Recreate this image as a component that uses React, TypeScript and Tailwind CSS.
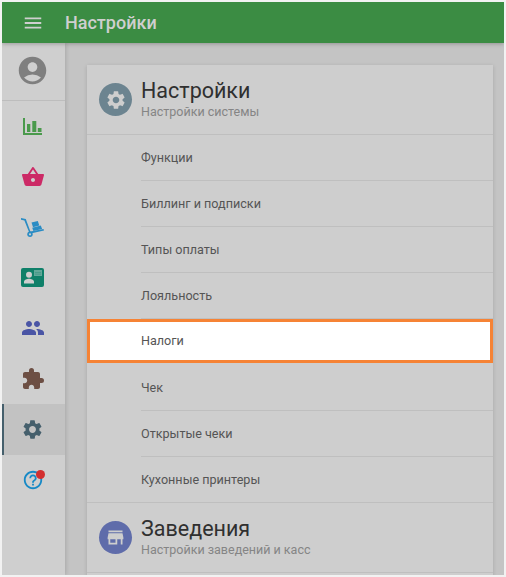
import { MdAccountCircle, MdExtension, MdHelpOutline, MdMenu, MdPeople, MdSettings, MdShoppingBasket, MdStore } from "react-icons/md";

const rows = ["Функции", "Биллинг и подписки", "Типы оплаты", "Лояльность", "Налоги", "Чек", "Открытые чеки", "Кухонные принтеры"];

const ChartIcon = () => (
  <svg viewBox="0 0 19 17" className="w-[19px] h-[17px] text-[#4a9a4c]" fill="currentColor">
    <path d="M0 0h2v15h17v2H0z" />
    <path d="M4 6h3.300v8H4zM9.300 3h4v11h-4zM14.800 10h3.700v4h-3.700z" />
  </svg>
);

const DollyIcon = () => (
  <svg viewBox="0 0 23 19" className="w-[23px] h-[19px] text-[#2a8cc4]" fill="currentColor">
    <path d="M0 0l4.800 1 4.600 12.400L22.500 11l.5 1.600-13.400 3-1.200-.6L3.400 2.600 0 1.800z" />
    <circle cx="9" cy="16.300" r="2.700" />
    <circle cx="9" cy="16.300" r="1.100" fill="#cfcfcf" />
    <path d="M10.500 4.600L16.800 3l1.500 4.500-6.300 1.700z" />
    <path d="M11.200 9.800l8.600-2.400 1.300 3.600-8.700 2z" />
  </svg>
);

const CardIcon = () => (
  <svg viewBox="0 0 23 19" className="w-[23px] h-[19px]">
    <rect width="23" height="19" rx="2" fill="#0f8069" />
    <circle cx="8" cy="6.800" r="3" fill="#cfcfcf" />
    <path d="M3 15.500v-1.700c0-1.800 3-3 5-3s5 1.200 5 3v1.700z" fill="#cfcfcf" />
    <rect x="13" y="2" width="8" height="6" fill="#62a899" />
    <path d="M14 4h6v.8h-6zM14 5.800h6v.8h-6z" fill="#0f8069" opacity="0.4" />
  </svg>
);

const SideItem = ({ children, active }: { children: React.ReactNode; active?: boolean }) => (
  <div className={`h-[50.500px] flex items-center justify-center ${active ? "bg-[#c2c2c2] border-l-2 border-[#455f6c] pr-[4px]" : "pr-[2px]"}`}>
    {children}
  </div>
);

const SectionHead = ({ title, sub, color, icon }: { title: string; sub: string; color: string; icon: React.ReactNode }) => (
  <div className="h-[69px] flex items-center pl-3">
    <div className={`w-[33px] h-[33px] rounded-full flex items-center justify-center ${color}`}>{icon}</div>
    <div className="ml-[9px] -mt-[2px]">
      <div className="text-[21.500px] leading-[26px] text-[#303030]">{title}</div>
      <div className="text-[12.500px] leading-[15px] text-[#858585]">{sub}</div>
    </div>
  </div>
);

export default function App() {
  return (
    <div className="w-[506px] h-[577px] p-[2px] bg-[#f2f2f2] overflow-hidden font-['Roboto',sans-serif]">
      <div className="h-full flex flex-col bg-[#c4c4c4] overflow-hidden">
        <header className="relative z-10 h-[41px] shrink-0 bg-[#3b8c43] flex items-center shadow-[0_1px_4px_rgba(0,0,0,0.25)]">
          <MdMenu className="ml-[20px] w-[22px] h-[22px] text-[#cfcfcf]" />
          <div className="ml-[21px] text-[18px] font-medium text-[#cfcfcf]">Настройки</div>
        </header>
        <div className="flex flex-1 min-h-0">
          <aside className="w-[63px] shrink-0 bg-[#cfcfcf] shadow-[1px_0_4px_rgba(0,0,0,0.15)]">
            <div className="h-[58px] flex items-center justify-center border-b border-[#bdbdbd] pr-[2px] pb-[2px]">
              <MdAccountCircle className="w-[33px] h-[33px] text-[#7f7f7f]" />
            </div>
            <SideItem><ChartIcon /></SideItem>
            <SideItem><MdShoppingBasket className="w-6 h-6 text-[#cc2a66]" /></SideItem>
            <SideItem><DollyIcon /></SideItem>
            <SideItem><CardIcon /></SideItem>
            <SideItem><MdPeople className="w-6 h-6 text-[#4a55a5]" /></SideItem>
            <SideItem><MdExtension className="w-6 h-6 text-[#6d4f44]" /></SideItem>
            <SideItem active><MdSettings className="w-[23px] h-[23px] text-[#455f6c]" /></SideItem>
            <SideItem>
              <div className="relative">
                <MdHelpOutline className="w-[22px] h-[22px] text-[#1689c6]" />
                <div className="absolute top-px -right-[1.500px] w-[9px] h-[9px] rounded-full bg-[#d32f2f]" />
              </div>
            </SideItem>
          </aside>
          <main className="flex-1 pl-[22px] pr-[11px] pt-[22px] min-w-0">
            <div className="bg-[#cecece] shadow-[0_1px_4px_rgba(0,0,0,0.15)]">
              <SectionHead title="Настройки" sub="Настройки системы" color="bg-[#6c8490]" icon={<MdSettings className="w-[22px] h-[22px] text-[#cecece]" />} />
              <div className="border-t border-[#bfbfbf]">
                {rows.map((r, i) =>
                  r === "Налоги" ? (
                    <div key={r} className="h-[44px] mb-[2px] flex items-center pl-[51px] bg-white border-[3px] border-[#f68335] text-[12.600px] text-[#555555]">
                      {r}
                    </div>
                  ) : (
                    <div key={r} className={`${i === rows.length - 1 ? "h-[45px]" : "h-[46px]"} flex items-center pl-[54px] text-[12.600px] text-[#555555]`}>
                      <div className={`h-full flex-1 flex items-center pt-px ${i === rows.length - 1 ? "" : "border-b border-[#bfbfbf]"}`}>{r}</div>
                    </div>
                  ),
                )}
              </div>
              <div className="border-t border-[#bfbfbf]">
                <SectionHead title="Заведения" sub="Настройки заведений и касс" color="bg-[#5f6caa]" icon={<MdStore className="w-[21px] h-[21px] text-[#cecece]" />} />
              </div>
              <div className="border-t border-[#bfbfbf] h-10" />
            </div>
          </main>
        </div>
      </div>
    </div>
  );
}
